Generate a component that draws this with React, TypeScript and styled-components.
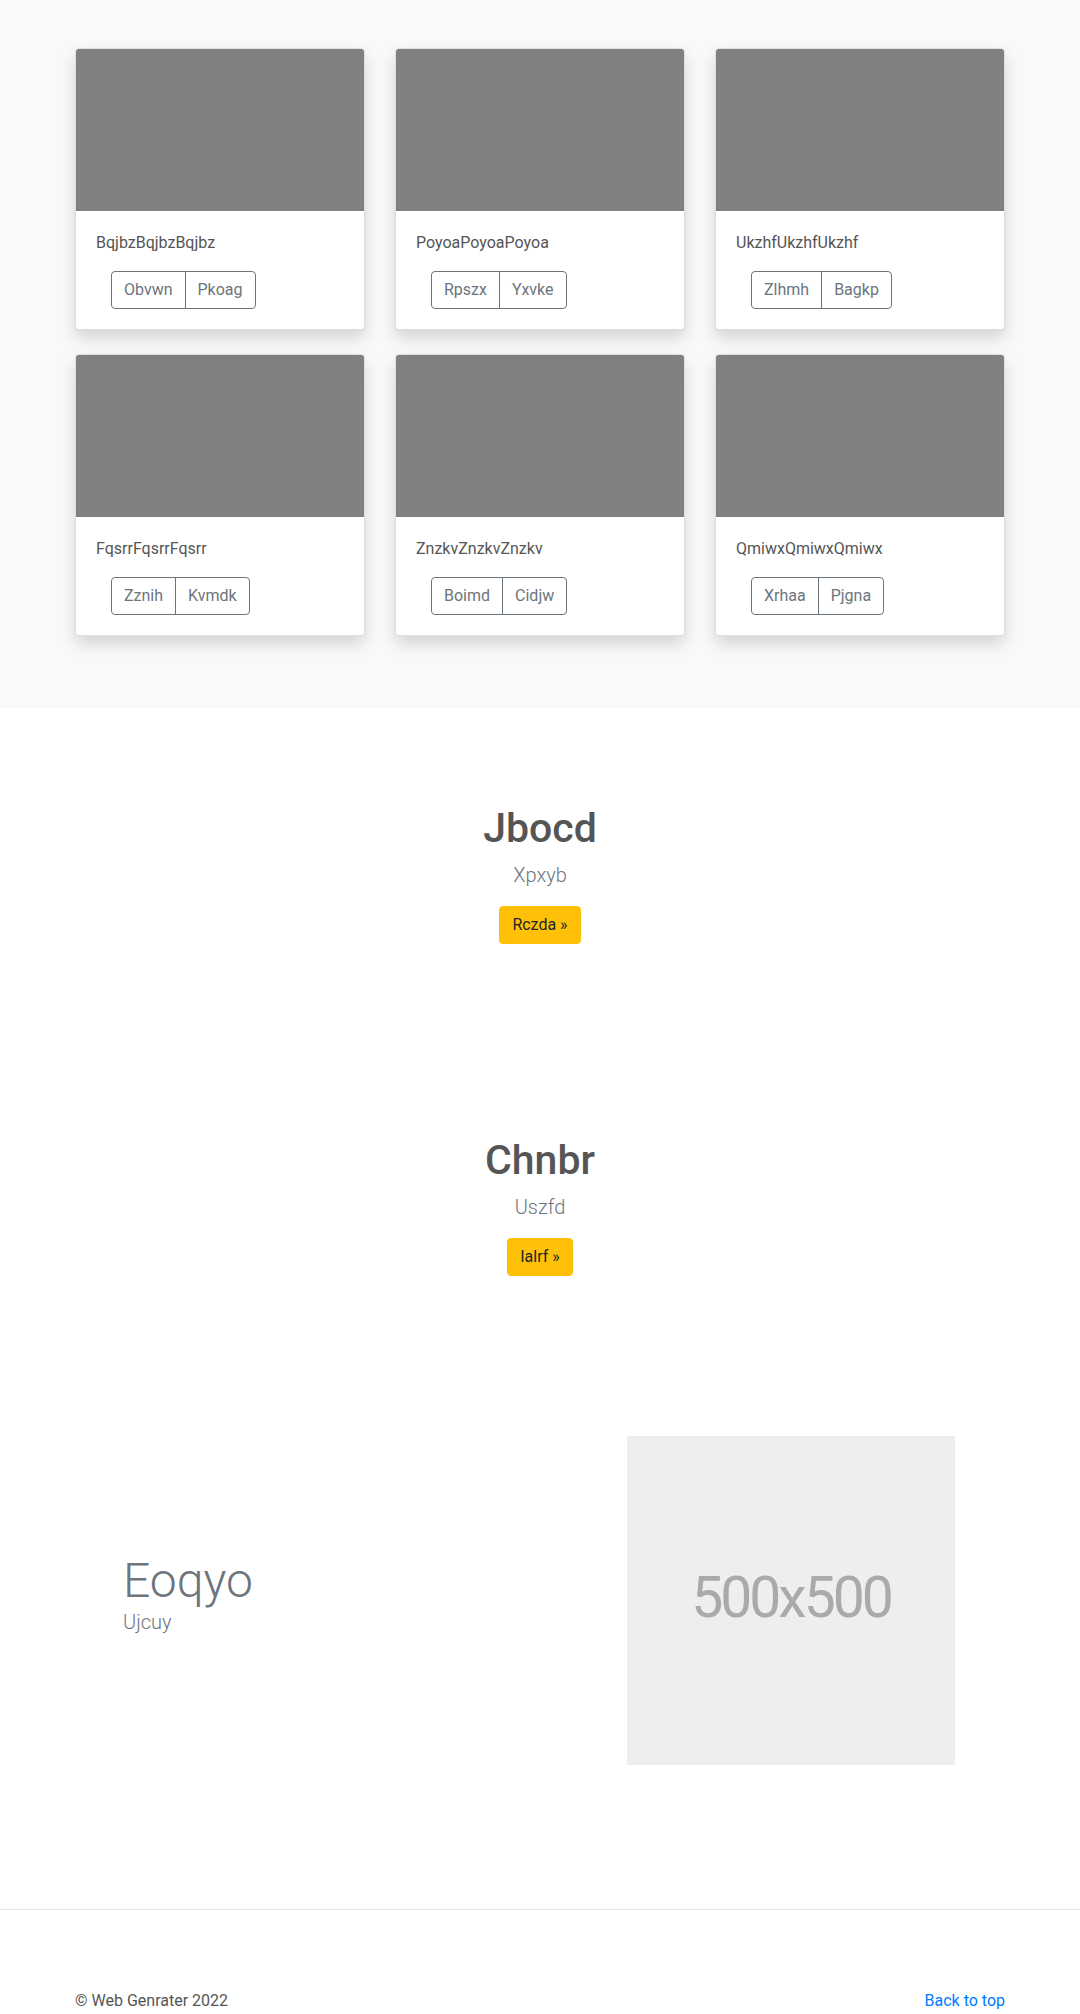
import React from "react";
import styled, { createGlobalStyle } from "styled-components";

const GlobalStyle = createGlobalStyle`
  html, body {
    margin: 0;
    padding: 0;
    background: #fff;
  }
  body {
    font-family: "Segoe UI", Roboto, "Helvetica Neue", Arial, sans-serif;
    font-size: 16px;
    line-height: 1.5;
    color: #555;
  }
  * { box-sizing: border-box; }
`;

const Album = styled.section`
  background: #f8f9fa;
  padding: 48px 0 48px;
`;

const Container = styled.div`
  width: 960px;
  margin: 0 auto;
  padding: 0 15px;
`;

const CardGrid = styled.div`
  display: grid;
  grid-template-columns: repeat(3, 1fr);
  column-gap: 30px;
`;

const Card = styled.div`
  background: #fff;
  border: 1px solid rgba(0, 0, 0, 0.125);
  border-radius: 4px;
  box-shadow: 0 8px 16px rgba(0, 0, 0, 0.15);
  margin-bottom: 24px;
  overflow: hidden;
`;

const CardImage = styled.div`
  height: 162px;
  background: #808080;
`;

const CardBody = styled.div`
  padding: 20px;
`;

const CardText = styled.p`
  margin: 0 0 16px;
  font-size: 16px;
  line-height: 24px;
  color: #555;
`;

const BtnGroup = styled.div`
  display: inline-flex;
  margin-left: 15px;
`;

const OutlineBtn = styled.button`
  font-family: inherit;
  font-size: 16px;
  line-height: 24px;
  padding: 6px 12px;
  background: transparent;
  color: #6c757d;
  border: 1px solid #6c757d;
  border-radius: 0;
  cursor: pointer;
  &:first-child {
    border-radius: 4px 0 0 4px;
  }
  &:last-child {
    border-radius: 0 4px 4px 0;
    margin-left: -1px;
  }
`;

const Hero = styled.section`
  padding: 96px 0;
  text-align: center;
`;

const HeroTitle = styled.h1`
  margin: 0 0 8px;
  font-size: 41px;
  line-height: 48px;
  font-weight: 500;
  color: #555;
`;

const Lead = styled.p`
  margin: 0 0 16px;
  font-size: 20px;
  line-height: 30px;
  font-weight: 300;
  color: #6c757d;
`;

const WarningBtn = styled.a`
  display: inline-block;
  font-size: 16px;
  line-height: 24px;
  padding: 6px 12px;
  background: #ffc107;
  border: 1px solid #ffc107;
  border-radius: 4px;
  color: #212529;
  text-decoration: none;
`;

const Feature = styled.section`
  padding: 64px 0 144px;
`;

const FeatureRow = styled.div`
  display: flex;
  align-items: center;
`;

const FeatureText = styled.div`
  flex: 1;
  padding-left: 48px;
  padding-bottom: 14px;
`;

const FeatureTitle = styled.h2`
  margin: 0;
  font-size: 48px;
  line-height: 1.2;
  font-weight: 300;
  color: #6c757d;
`;

const FeatureLead = styled.p`
  margin: 0;
  font-size: 20px;
  line-height: 1.3;
  font-weight: 300;
  color: #6c757d;
`;

const Placeholder = styled.div`
  width: 328px;
  height: 329px;
  margin-right: 50px;
  background: #eeeeee;
  display: flex;
  align-items: center;
  justify-content: center;
  color: #aaaaaa;
  font-size: 57px;
  letter-spacing: -3px;
  padding-bottom: 6px;
`;

const Footer = styled.footer`
  border-top: 1px solid #e5e5e5;
  padding: 79px 0 0;
  height: 105px;
`;

const FooterRow = styled.div`
  display: flex;
  justify-content: space-between;
  font-size: 16px;
  line-height: 24px;
  color: #555;
`;

const FooterLink = styled.a`
  color: #007bff;
  text-decoration: none;
`;

const cards = [
  { title: "BqjbzBqjbzBqjbz", a: "Obvwn", b: "Pkoag" },
  { title: "PoyoaPoyoaPoyoa", a: "Rpszx", b: "Yxvke" },
  { title: "UkzhfUkzhfUkzhf", a: "Zlhmh", b: "Bagkp" },
  { title: "FqsrrFqsrrFqsrr", a: "Zznih", b: "Kvmdk" },
  { title: "ZnzkvZnzkvZnzkv", a: "Boimd", b: "Cidjw" },
  { title: "QmiwxQmiwxQmiwx", a: "Xrhaa", b: "Pjgna" },
];

const heroes = [
  { title: "Jbocd", lead: "Xpxyb", btn: "Rczda »" },
  { title: "Chnbr", lead: "Uszfd", btn: "Ialrf »" },
];

export default function App() {
  return (
    <>
      <GlobalStyle />
      <Album>
        <Container>
          <CardGrid>
            {cards.map((c) => (
              <Card key={c.title}>
                <CardImage />
                <CardBody>
                  <CardText>{c.title}</CardText>
                  <BtnGroup>
                    <OutlineBtn type="button">{c.a}</OutlineBtn>
                    <OutlineBtn type="button">{c.b}</OutlineBtn>
                  </BtnGroup>
                </CardBody>
              </Card>
            ))}
          </CardGrid>
        </Container>
      </Album>
      {heroes.map((h) => (
        <Hero key={h.title}>
          <Container>
            <HeroTitle>{h.title}</HeroTitle>
            <Lead>{h.lead}</Lead>
            <WarningBtn href="#">{h.btn}</WarningBtn>
          </Container>
        </Hero>
      ))}
      <Feature>
        <Container>
          <FeatureRow>
            <FeatureText>
              <FeatureTitle>Eoqyo</FeatureTitle>
              <FeatureLead>Ujcuy</FeatureLead>
            </FeatureText>
            <Placeholder>500x500</Placeholder>
          </FeatureRow>
        </Container>
      </Feature>
      <Footer>
        <Container>
          <FooterRow>
            <span>© Web Genrater 2022</span>
            <FooterLink href="#">Back to top</FooterLink>
          </FooterRow>
        </Container>
      </Footer>
    </>
  );
}
